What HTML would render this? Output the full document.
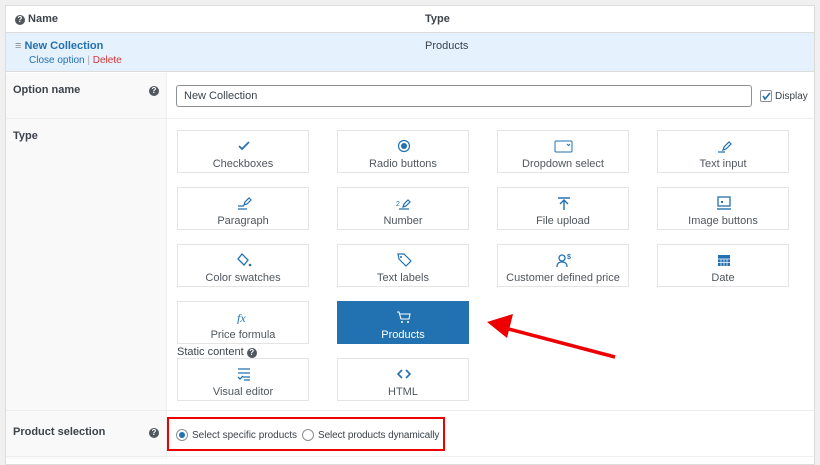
<!DOCTYPE html><html><head><style>
*{box-sizing:border-box;margin:0;padding:0}
body{width:820px;height:460px;background:#f0f0f0;font-family:"Liberation Sans",sans-serif;font-size:11px;color:#3c434a;position:relative;overflow:hidden}
.panel{position:absolute;left:5px;top:5px;width:810px;height:460px;background:#fff;border:1px solid #dcdcdc}
.abs{position:absolute}
.q{display:inline-block;width:10px;height:10px;border-radius:50%;background:#50575e;color:#fff;font-size:8px;font-weight:bold;text-align:center;line-height:10px}
.card{position:absolute;width:132px;height:43px;border:1px solid #e4e4e4;background:#fff;text-align:center;color:#50575e;font-size:11px}
.card svg{position:absolute;left:58px;top:8px}
.card span{position:absolute;left:0;right:0;top:27px}
.sel{background:#2271b1;border-color:#2271b1;color:#fff}
</style></head><body>
<div class="panel"></div>
<div class="abs" style="left:6px;top:32px;width:808px;height:40px;background:#e5f1fd;border-top:1px solid #dcdcdc;border-bottom:1px solid #dcdcdc"></div>
<div class="abs" style="left:6px;top:73px;width:161px;height:386px;background:#f9f9f9;border-right:1px solid #eee"></div>
<div class="abs" style="left:6px;top:118px;width:808px;height:1px;background:#eee"></div>
<div class="abs" style="left:6px;top:410px;width:808px;height:1px;background:#eee"></div>
<div class="abs" style="left:6px;top:456px;width:808px;height:1px;background:#eee"></div>
<div class="abs" style="left:15px;top:13px;font-weight:bold"><span class="q">?</span> Name</div>
<div class="abs" style="left:425px;top:13px;font-weight:bold">Type</div>
<div class="abs" style="left:15px;top:40px;color:#2271b1;font-weight:bold"><span style="color:#8c8f94">≡</span> New Collection</div>
<div class="abs" style="left:29px;top:55px;font-size:10px;color:#2271b1">Close option <span style="color:#aaa">|</span> <span style="color:#d63638">Delete</span></div>
<div class="abs" style="left:425px;top:40px">Products</div>
<div class="abs" style="left:13px;top:84px;font-weight:bold">Option name</div>
<div class="abs" style="left:149px;top:84px"><span class="q">?</span></div>
<div class="abs" style="left:176px;top:85px;width:576px;height:22px;border:1px solid #8c8f94;border-radius:3px;padding:4px 7px;font-size:11px">New Collection</div>
<div class="abs" style="left:760px;top:90px;width:12px;height:12px;border:1px solid #8c8f94;border-radius:2px"><svg width="10" height="10" style="position:absolute;left:0;top:0"><path d="M2 5l2 3 5-6" stroke="#2271b1" stroke-width="1.6" fill="none"/></svg></div>
<div class="abs" style="left:775px;top:91px;font-size:10px">Display</div>
<div class="abs" style="left:13px;top:130px;font-weight:bold">Type</div>

<div class="card" style="left:177px;top:130px"><svg width="16" height="14"><path d="M3 7l3 3 7-7" stroke="#2271b1" stroke-width="1.7" fill="none"/></svg><span>Checkboxes</span></div>
<div class="card" style="left:337px;top:130px"><svg width="16" height="14"><circle cx="8" cy="7" r="5.5" stroke="#2271b1" fill="none" stroke-width="1.2"/><circle cx="8" cy="7" r="3" fill="#2271b1"/></svg><span>Radio buttons</span></div>
<div class="card" style="left:497px;top:130px"><svg width="20" height="14" style="left:56px"><rect x="1" y="2" width="17" height="11" stroke="#2271b1" fill="none" rx="1"/><path d="M13 5l1.5 1.5L16 5" stroke="#2271b1" fill="none"/></svg><span>Dropdown select</span></div>
<div class="card" style="left:657px;top:130px"><svg width="16" height="14"><path d="M2 13h7M7 11l1-3 5-5 2 2-5 5z" stroke="#2271b1" fill="none" stroke-width="1.2"/></svg><span>Text input</span></div>

<div class="card" style="left:177px;top:187px"><svg width="16" height="14"><path d="M2 10h6M2 13h9M8 9l1-3 4-4 2 2-4 4z" stroke="#2271b1" fill="none" stroke-width="1.2"/></svg><span>Paragraph</span></div>
<div class="card" style="left:337px;top:187px"><svg width="16" height="14"><text x="0" y="10" font-size="7" fill="#2271b1">2</text><path d="M3 13h10M7 11l1-3 4-4 2 2-4 4z" stroke="#2271b1" fill="none" stroke-width="1.2"/></svg><span>Number</span></div>
<div class="card" style="left:497px;top:187px"><svg width="16" height="14"><path d="M2 2h12M8 4v10M4 8l4-4 4 4" stroke="#2271b1" fill="none" stroke-width="1.4"/></svg><span>File upload</span></div>
<div class="card" style="left:657px;top:187px"><svg width="16" height="14"><rect x="2" y="1" width="12" height="9" stroke="#2271b1" fill="none" stroke-width="1.3"/><rect x="5" y="5" width="2" height="2" fill="#2271b1"/><path d="M1 13h14" stroke="#2271b1" stroke-width="1.4"/></svg><span>Image buttons</span></div>

<div class="card" style="left:177px;top:244px"><svg width="16" height="14"><path d="M6 1l6 6-4 5-6-6z" stroke="#2271b1" fill="none" stroke-width="1.3"/><circle cx="14" cy="12" r="1.3" fill="#2271b1"/></svg><span>Color swatches</span></div>
<div class="card" style="left:337px;top:244px"><svg width="16" height="14"><path d="M2 1h6l7 7-5 5-7-7z" stroke="#2271b1" fill="none" stroke-width="1.2"/><circle cx="5" cy="4" r="1" fill="#2271b1"/></svg><span>Text labels</span></div>
<div class="card" style="left:497px;top:244px"><svg width="16" height="14"><circle cx="6" cy="5" r="3" stroke="#2271b1" fill="none" stroke-width="1.3"/><path d="M1 14c0-4 2-5 5-5s5 1 5 5" stroke="#2271b1" fill="none" stroke-width="1.3"/><text x="11" y="6" font-size="7" font-weight="bold" fill="#2271b1">$</text></svg><span>Customer defined price</span></div>
<div class="card" style="left:657px;top:244px"><svg width="16" height="14"><rect x="2" y="2" width="12" height="11" fill="#2271b1"/><path d="M2 6h12M5 6v7M8 6v7M11 6v7M2 9.5h12" stroke="#fff" stroke-width=".7"/></svg><span>Date</span></div>

<div class="card" style="left:177px;top:301px"><svg width="16" height="14"><text x="1" y="12" font-size="12" font-style="italic" font-family="Liberation Serif" fill="#2271b1">fx</text></svg><span>Price formula</span></div>
<div class="card sel" style="left:337px;top:301px"><svg width="16" height="14"><path d="M1 2h2l2 7h8l1-5H4" stroke="#fff" fill="none" stroke-width="1.1"/><circle cx="6" cy="12" r="1" fill="#fff"/><circle cx="12" cy="12" r="1" fill="#fff"/></svg><span>Products</span></div>
<div class="abs" style="left:177px;top:346px;font-size:11px">Static content <span class="q">?</span></div>
<div class="card" style="left:177px;top:358px"><svg width="16" height="14"><path d="M2 2h12M2 6h12M7 10h7M8 13h6M2 10l2 2 3-3" stroke="#2271b1" fill="none" stroke-width="1.3"/></svg><span>Visual editor</span></div>
<div class="card" style="left:337px;top:358px"><svg width="16" height="14"><path d="M6 3L2 7l4 4M10 3l4 4-4 4" stroke="#2271b1" fill="none" stroke-width="1.6"/></svg><span>HTML</span></div>

<div class="abs" style="left:13px;top:426px;font-weight:bold">Product selection</div>
<div class="abs" style="left:149px;top:426px"><span class="q">?</span></div>
<div class="abs" style="left:167px;top:417px;width:278px;height:34px;border:2px solid #e00"></div>
<div class="abs" style="left:176px;top:429px;width:12px;height:12px;border:1px solid #8c8f94;border-radius:50%"><div style="position:absolute;left:2px;top:2px;width:6px;height:6px;border-radius:50%;background:#2271b1"></div></div>
<div class="abs" style="left:192px;top:430px;font-size:10px">Select specific products</div>
<div class="abs" style="left:302px;top:429px;width:12px;height:12px;border:1px solid #8c8f94;border-radius:50%"></div>
<div class="abs" style="left:318px;top:430px;font-size:10px;letter-spacing:-.1px">Select products dynamically</div>

<svg class="abs" style="left:0;top:0" width="820" height="460"><line x1="615" y1="357" x2="505" y2="328" stroke="#e00" stroke-width="3.5"/><polygon points="487,322 513,314 507,338" fill="#e00"/></svg>
</body></html>
